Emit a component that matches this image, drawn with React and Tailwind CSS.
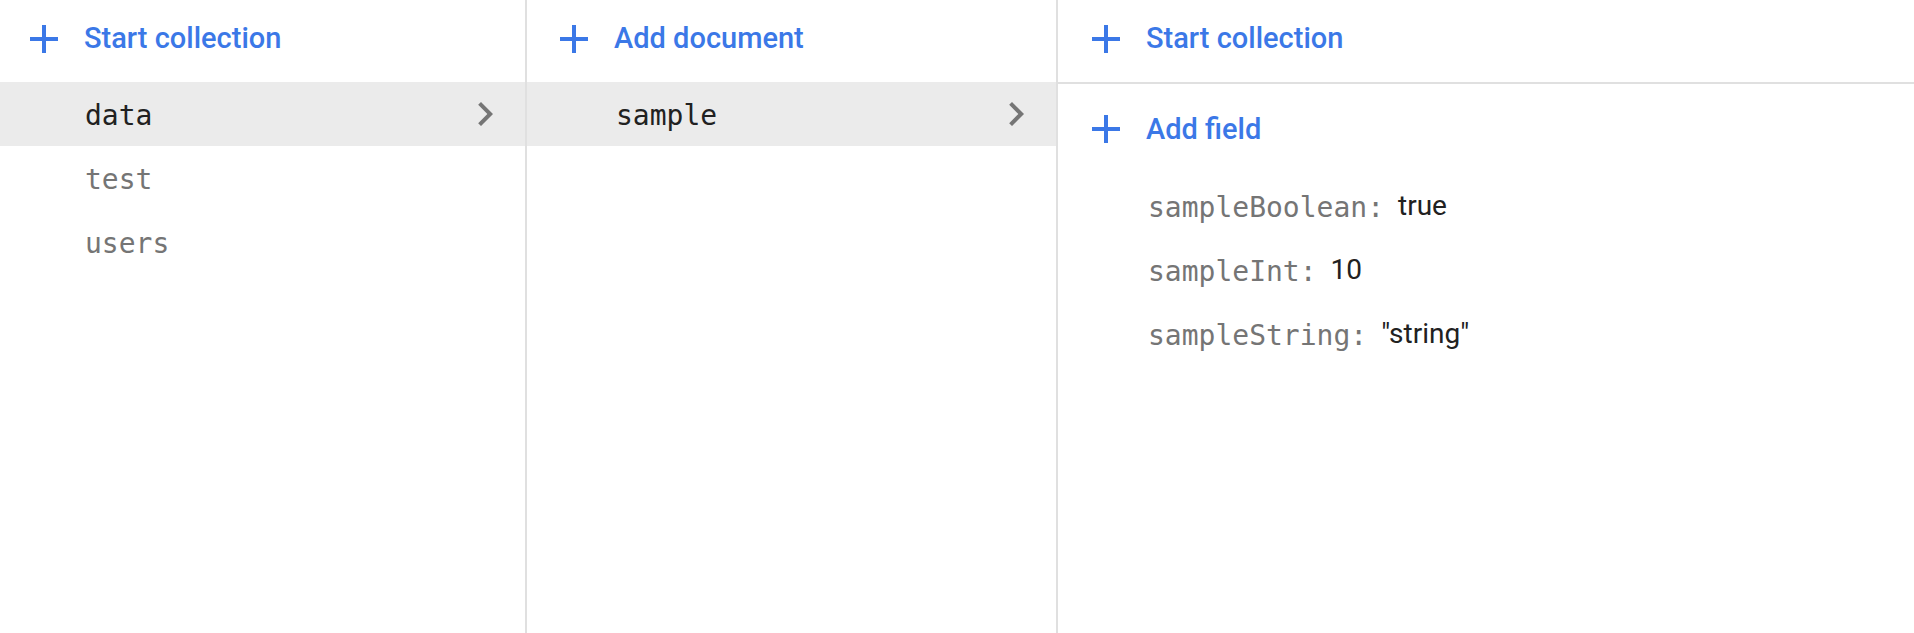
import React from "react";

const mono = { fontFamily: '"DejaVu Sans Mono", monospace' };

// Material "add" icon
const PlusIcon = () => (
  <svg width="48" height="48" viewBox="0 0 24 24" fill="#3b78e7" className="shrink-0">
    <path d="M19 13h-6v6h-2v-6H5v-2h6V5h2v6h6v2z" />
  </svg>
);

// Material "chevron_right" icon
const Chevron = () => (
  <svg width="48" height="48" viewBox="0 0 24 24" fill="#757575" className="shrink-0">
    <path d="M10 6L8.59 7.41 13.17 12l-4.58 4.59L10 18l6-6z" />
  </svg>
);

const ActionRow = ({ label, className = "" }) => (
  <button className={`flex items-center h-[64px] text-left ${className}`}>
    <PlusIcon />
    <span className="ml-[16px] text-[29px] leading-none font-medium text-[#3b78e7] font-['Roboto',sans-serif]">
      {label}
    </span>
  </button>
);

const ListItem = ({ name, active, pad = "pl-[85px]" }) => (
  <div
    className={`flex items-center justify-between h-[64px] ${pad} pr-[16px] ${
      active ? "bg-[#ebebeb] text-[#212121]" : "text-[#757575]"
    }`}
  >
    <span className="text-[28px] leading-none pt-[4px]" style={mono}>
      {name}
    </span>
    {active && <Chevron />}
  </div>
);

const Field = ({ name, value }) => (
  <div className="flex items-center h-[64px] pl-[90px]">
    <span className="text-[28px] leading-none text-[#757575] pt-[3px]" style={mono}>
      {name}:
    </span>
    <span className="ml-[14px] text-[28px] leading-none text-[#212121] font-['Roboto',sans-serif]">
      {value}
    </span>
  </div>
);

export default function App() {
  return (
    <div className="flex h-[633px] w-full bg-white overflow-hidden font-['Roboto',sans-serif]">
      {/* collections */}
      <div className="w-[527px] shrink-0 border-r-2 border-[#e0e0e0]">
        <div className="h-[82px] flex items-center pl-[20px] pb-[5px]">
          <ActionRow label="Start collection" />
        </div>
        <ListItem name="data" active />
        <ListItem name="test" />
        <ListItem name="users" />
      </div>

      {/* documents */}
      <div className="w-[531px] shrink-0 border-r-2 border-[#e0e0e0]">
        <div className="h-[82px] flex items-center pl-[23px] pb-[5px]">
          <ActionRow label="Add document" />
        </div>
        <ListItem name="sample" active pad="pl-[89px]" />
      </div>

      {/* document detail */}
      <div className="flex-1">
        <div className="h-[84px] flex items-center pl-[24px] pb-[5px] border-b-2 border-[#e0e0e0]">
          <ActionRow label="Start collection" />
        </div>
        <div className="mt-[13px] pl-[24px]">
          <ActionRow label="Add field" />
        </div>
        <div className="mt-[13px]">
          <Field name="sampleBoolean" value="true" />
          <Field name="sampleInt" value="10" />
          <Field name="sampleString" value={'"string"'} />
        </div>
      </div>
    </div>
  );
}
